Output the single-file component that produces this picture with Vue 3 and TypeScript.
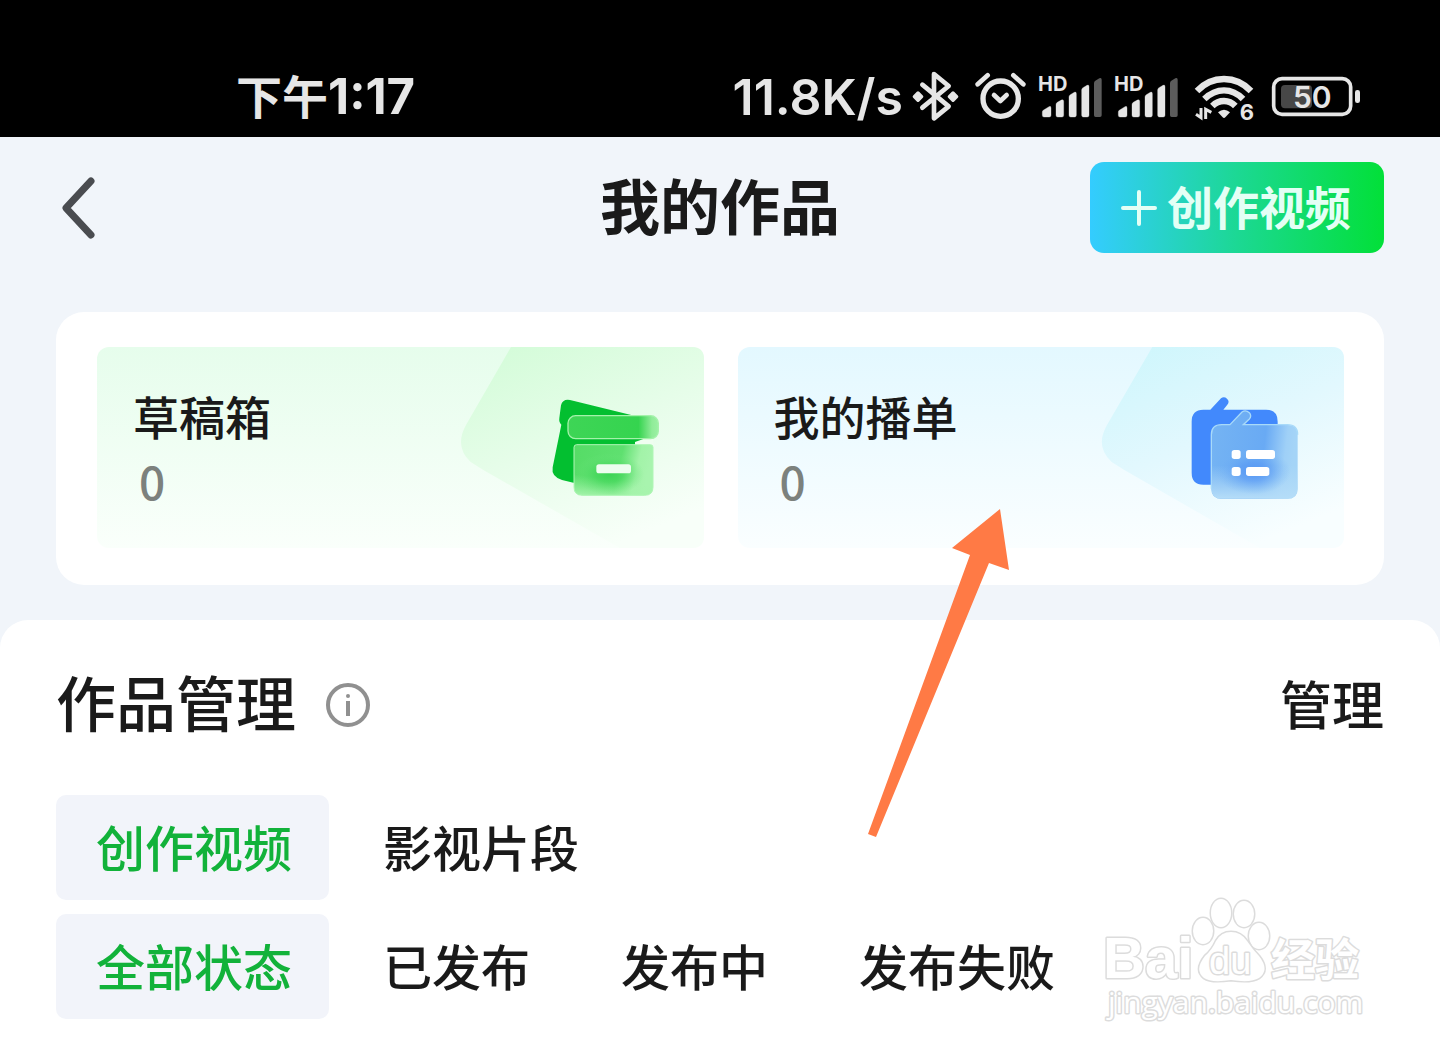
<script setup lang="ts">
import { ref } from 'vue'

interface Entry {
  label: string
  count: number
  tone: 'green' | 'blue'
}

const entries: Entry[] = [
  { label: '草稿箱', count: 0, tone: 'green' },
  { label: '我的播单', count: 0, tone: 'blue' },
]

const kinds = ['创作视频', '影视片段']
const states = ['全部状态', '已发布', '发布中', '发布失败']
const activeKind = ref(kinds[0])
const activeState = ref(states[0])
</script>

<template>
  <div class="page">
    <div class="status">
      <span class="status-text time">下午<b>1:17</b></span>
      <div class="status-right">
        <span class="status-text">11.8K/s</span>
        <svg class="tile" width="58" height="60" viewBox="570 21 174 180" aria-hidden="true">
          <path d="M607 74L686 139L642 175V42L686 78L607 143" fill="none" stroke="#e6e6e6" stroke-width="14" stroke-linejoin="round" stroke-linecap="round" />
          <path d="M594 99l11 11-11 11-11-11zM699 99l11 11-11 11-11-11z" fill="#e6e6e6" stroke="#e6e6e6" stroke-width="10" stroke-linejoin="round" />
        </svg>
        <svg class="tile" width="64" height="60" viewBox="744 21 192 180" aria-hidden="true">
          <g fill="none" stroke="#e6e6e6" stroke-linecap="round" stroke-linejoin="round">
            <circle cx="842" cy="116" r="53" stroke-width="16" />
            <path d="M822 105l19 18 19-18" stroke-width="14" />
            <path d="M773 73L803 46M880 46L910 73" stroke-width="14" />
          </g>
        </svg>
        <svg v-for="n in 2" :key="n" class="tile" width="76" height="60" viewBox="36 21 228 180" aria-hidden="true">
          <text x="54" y="94" font-size="60" font-weight="700" fill="#e6e6e6">HD</text>
          <path d="M67 156q0-4 4-6l16-10q6-3 6 4v22q0 5-5 5H72q-5 0-5-5zM108 134q0-5 4-7l12-7q7-3 7 4v42q0 5-5 5h-13q-5 0-5-5zM147 111q0-5 4-7l12-7q6-3 6 4v65q0 5-5 5h-12q-5 0-5-5zM185 90q0-5 4-7l12-7q6-3 6 4v86q0 5-5 5h-12q-5 0-5-5z" fill="#e6e6e6" stroke="#e6e6e6" stroke-width="1" />
          <path d="M222 70q0-6 4-8l12-7q7-3 7 4v107q0 5-5 5h-13q-5 0-5-5z" fill="#5c5c5c" />
        </svg>
        <svg class="tile" width="78" height="60" viewBox="492 21 234 180" aria-hidden="true">
          <g fill="none" stroke="#e6e6e6" stroke-width="19">
            <path d="M531 93Q565 57 612 57T693 93" />
            <path d="M553 117Q580 91 612 91T669 117" />
            <path d="M577 138Q592 123 612 123T646 138" />
          </g>
          <path d="M594 157q18-16 36 0l-14 15q-4 4-8 0z" fill="#e6e6e6" />
          <path d="M543 144v29l-15-10M557 177v-29l17 9" fill="none" stroke="#e6e6e6" stroke-width="9" />
          <text x="659" y="181" font-size="66" font-weight="700" fill="#e6e6e6">6</text>
        </svg>
        <svg class="tile" width="100" height="60" viewBox="726 21 300 180" aria-hidden="true">
          <rect x="783" y="75" width="93" height="70" rx="12" fill="#474747" />
          <rect x="761" y="56" width="231" height="107" rx="25" fill="none" stroke="#e6e6e6" stroke-width="11" />
          <rect x="1005" y="90" width="15" height="39" rx="7" fill="#e6e6e6" />
          <text x="877" y="145" text-anchor="middle" font-size="90" font-weight="600" fill="#e6e6e6">50</text>
        </svg>
      </div>
    </div>

    <header class="header">
      <button class="back" type="button" aria-label="返回">
        <svg width="44" height="70" viewBox="0 0 44 70" aria-hidden="true">
          <path d="M35 8L10 35L35 62" fill="none" stroke="#4a4c50" stroke-width="7" stroke-linecap="round" stroke-linejoin="round" />
        </svg>
      </button>
      <h1 class="title">我的作品</h1>
      <button class="create" type="button">
        <svg width="36" height="36" viewBox="0 0 36 36" aria-hidden="true">
          <path d="M18 2V34M2 18H34" stroke="#e4fff5" stroke-width="4" stroke-linecap="round" />
        </svg>
        <span>创作视频</span>
      </button>
    </header>

    <nav class="panel" aria-label="我的内容">
      <button v-for="e in entries" :key="e.tone" type="button" class="entry" :class="e.tone">
        <span class="entry-label">{{ e.label }}</span>
        <span class="entry-count">{{ e.count }}</span>
        <svg v-if="e.tone === 'green'" class="art" width="246" height="201" viewBox="54 51 738 603" aria-hidden="true">
          <defs>
            <linearGradient id="g-bg" x1="0.1" y1="0" x2="0.6" y2="1">
              <stop offset="0" stop-color="#d3fcd8" />
              <stop offset="0.5" stop-color="#e6fde9" />
              <stop offset="1" stop-color="#f8fff9" />
            </linearGradient>
            <linearGradient id="g-lid" x1="0" x2="1">
              <stop offset="0" stop-color="#3ed556" />
              <stop offset="0.78" stop-color="#35d44f" />
              <stop offset="0.93" stop-color="#90ec99" />
              <stop offset="1" stop-color="#9bf0a3" />
            </linearGradient>
            <linearGradient id="g-box" x1="0" x2="1" y1="0" y2="0.15">
              <stop offset="0" stop-color="#55dc66" />
              <stop offset="0.62" stop-color="#5fe070" />
              <stop offset="0.85" stop-color="#a2f3a8" />
              <stop offset="1" stop-color="#a8f4ae" />
            </linearGradient>
            <radialGradient id="g-glow">
              <stop offset="0" stop-color="#3cd455" />
              <stop offset="0.4" stop-color="#44d75b" stop-opacity="0.7" />
              <stop offset="1" stop-color="#70e57f" stop-opacity="0" />
            </radialGradient>
            <linearGradient id="g-low" x1="0.2" y1="0" x2="0" y2="1">
              <stop offset="0.6" stop-color="#a6f4ac" stop-opacity="0" />
              <stop offset="1" stop-color="#a6f4ac" />
            </linearGradient>
          </defs>
          <path d="M213 51L78 285Q42 350 92 396L130 420L540 654H756Q792 654 792 618V87Q792 51 756 51Z" fill="url(#g-bg)" />
          <path d="M363 226Q368 206 390 210L595 260L611 325Q608 336 594 336L585 336V440L400 458L366 450Q333 440 338 412L364 284Q356 277 358 264Z" fill="#03bf30" />
          <path d="M585 336L612 326H640V344H585Z" fill="#effef0" />
          <rect x="384" y="257" width="271" height="69" rx="23" fill="url(#g-lid)" stroke="#a4f2aa" stroke-width="4" />
          <path d="M402 352q0-8 8-8h221q8 0 8 8v119q0 25-25 25H427q-25 0-25-25z" fill="url(#g-box)" />
          <path d="M402 352q0-8 8-8h221q8 0 8 8v119q0 25-25 25H427q-25 0-25-25z" fill="url(#g-low)" />
          <ellipse cx="508" cy="432" rx="105" ry="62" fill="url(#g-glow)" />
          <path d="M402 352q0-8 8-8h221q8 0 8 8v119q0 25-25 25H427q-25 0-25-25z" fill="none" stroke="#b0f6b6" stroke-width="3" />
          <rect x="469" y="403" width="104" height="27" rx="8" fill="#edfdef" />
        </svg>
        <svg v-else class="art" width="246" height="201" viewBox="54 51 738 603" aria-hidden="true">
          <defs>
            <linearGradient id="b-bg" x1="0.1" y1="0" x2="0.6" y2="1">
              <stop offset="0" stop-color="#cef6fc" />
              <stop offset="0.5" stop-color="#e2f8fe" />
              <stop offset="1" stop-color="#f8feff" />
            </linearGradient>
            <linearGradient id="b-box" x1="0" x2="1" y1="0" y2="0.12">
              <stop offset="0" stop-color="#75b4f3" />
              <stop offset="0.65" stop-color="#69aaf4" />
              <stop offset="0.9" stop-color="#9fd0f7" />
              <stop offset="1" stop-color="#a4d4f7" />
            </linearGradient>
            <linearGradient id="b-low" x1="0" x2="0" y1="0" y2="1">
              <stop offset="0.55" stop-color="#b5ddf8" stop-opacity="0" />
              <stop offset="1" stop-color="#b5ddf8" />
            </linearGradient>
            <radialGradient id="b-glow">
              <stop offset="0" stop-color="#5596f4" />
              <stop offset="0.4" stop-color="#5c9cf4" stop-opacity="0.7" />
              <stop offset="1" stop-color="#75b4f3" stop-opacity="0" />
            </radialGradient>
          </defs>
          <path d="M217 51L81 285Q44 350 95 396L133 420L540 654H756Q792 654 792 618V87Q792 51 756 51Z" fill="url(#b-bg)" />
          <path d="M370 239H391L423 205Q432 198 441 206Q450 215 442 224L430 239H558Q593 239 593 275V464H370Q335 464 335 428V275Q335 239 370 239Z" fill="#4289fc" />
          <path d="M450 284L486 246Q497 238 508 248Q516 258 508 267L490 284H622Q653 284 653 314V476Q653 506 622 506H425Q394 506 394 476V314Q394 284 425 284Z" fill="url(#b-box)" />
          <path d="M394 314Q394 284 425 284H622Q653 284 653 314V476Q653 506 622 506H425Q394 506 394 476Z" fill="url(#b-low)" />
          <ellipse cx="520" cy="425" rx="112" ry="68" fill="url(#b-glow)" />
          <path d="M394 476V314Q394 284 425 284H450L486 246Q497 238 508 248Q516 258 508 267L490 284H622Q653 284 653 314" fill="none" stroke="#a8daf9" stroke-width="4" />
          <g fill="#fff">
            <rect x="455" y="360" width="27" height="27" rx="8" />
            <rect x="498" y="360" width="87" height="27" rx="8" />
            <rect x="455" y="411" width="27" height="27" rx="8" />
            <rect x="498" y="411" width="70" height="27" rx="8" />
          </g>
        </svg>
      </button>
    </nav>

    <main class="works">
      <div class="works-head">
        <h2 class="works-title">作品管理</h2>
        <button class="info" type="button" aria-label="说明">
          <svg width="44" height="44" viewBox="0 0 44 44" aria-hidden="true">
            <circle cx="22" cy="22" r="20" fill="none" stroke="#909090" stroke-width="4" />
            <path d="M22 18V33" stroke="#909090" stroke-width="4" />
            <circle cx="22" cy="13" r="2" fill="#909090" />
          </svg>
        </button>
        <button class="manage" type="button">管理</button>
      </div>
      <div class="filters">
        <button v-for="k in kinds" :key="k" type="button" class="chip" :class="{ active: k === activeKind }" @click="activeKind = k">{{ k }}</button>
      </div>
      <div class="filters">
        <button v-for="s in states" :key="s" type="button" class="chip" :class="{ active: s === activeState }" @click="activeState = s">{{ s }}</button>
      </div>
    </main>

    <svg class="arrow" width="142" height="330" viewBox="0 0 142 330" aria-hidden="true">
      <path d="M132 0L84 39L102 46L0 325L8 328L121 54L141 61Z" fill="#ff7a45" />
    </svg>

    <svg class="watermark" width="270" height="140" viewBox="0 0 270 140" aria-hidden="true">
      <g fill="#fff" stroke="#dcdcdc" stroke-width="3" paint-order="stroke" stroke-linejoin="round">
        <text class="brand" x="3" y="88" font-size="58" font-weight="700">Bai</text>
        <ellipse cx="103" cy="41" rx="10" ry="13" />
        <ellipse cx="121" cy="23" rx="10" ry="14" />
        <ellipse cx="144" cy="24" rx="10" ry="13" />
        <ellipse cx="159" cy="46" rx="10" ry="13" />
        <path d="M131 42Q141 42 147 51T159 66Q170 80 159 88Q151 93 131 90Q111 93 104 88Q94 80 105 66Q112 60 116 51Q121 42 131 42Z" />
        <text class="brand" x="109" y="84" font-size="38">du</text>
        <text class="cjk" x="171" y="86" font-size="44" font-weight="700">经验</text>
        <text class="url" x="8" y="123" font-size="30">jingyan.baidu.com</text>
      </g>
    </svg>
  </div>
</template>

<style>
body {
  margin: 0;
  background: #fff;
}
</style>

<style scoped>
.page {
  position: relative;
  display: flex;
  flex-direction: column;
  min-height: 100vh;
  overflow: hidden;
  background: #f1f5fa;
  color: #1a1a1a;
  font-family: Inter, "Noto Sans CJK SC", sans-serif;
}

button {
  margin: 0;
  padding: 0;
  border: 0;
  background: none;
  color: inherit;
  font: inherit;
  cursor: pointer;
}

.status {
  display: flex;
  align-items: center;
  justify-content: space-between;
  height: 80px;
  padding: 57px 78px 0 236px;
  background: #000;
  color: #e6e6e6;
}

.status-text {
  font-size: 50px;
  line-height: 60px;
  font-weight: 600;
  white-space: nowrap;
}

.time {
  font-size: 46px;
}

.time b {
  font-size: 49px;
  font-weight: 700;
}

.status-right {
  display: flex;
  align-items: center;
}

.status-right .status-text {
  margin-right: 7px;
}

.tile {
  flex: none;
}

.header {
  display: grid;
  grid-template-columns: 1fr auto 1fr;
  align-items: center;
  padding: 25px 56px 59px;
}

.back {
  justify-self: start;
  display: flex;
}

.title {
  margin: 0;
  font-size: 60px;
  line-height: 90px;
  font-weight: 700;
}

.create {
  justify-self: end;
  display: flex;
  align-items: center;
  gap: 10px;
  height: 91px;
  padding: 0 33px 0 31px;
  border-radius: 14px;
  background: linear-gradient(90deg, #34ccff, #1cd894 50%, #02e038);
  color: #e4fff5;
  font-size: 46px;
  line-height: 60px;
  font-weight: 700;
}

.panel {
  display: grid;
  grid-template-columns: 1fr 1fr;
  gap: 34px;
  margin: 0 56px;
  padding: 35px 40px 37px 41px;
  border-radius: 28px;
  background: #fff;
}

.entry {
  position: relative;
  display: flex;
  flex-direction: column;
  align-items: flex-start;
  height: 201px;
  padding: 41px 36px 0;
  border-radius: 12px;
  text-align: left;
}

.entry.green {
  background: linear-gradient(#e6fdec, #fafffb);
}

.entry.blue {
  background: linear-gradient(#e3f8ff, #fafeff);
}

.entry-label {
  font-size: 46px;
  line-height: 60px;
  font-weight: 500;
}

.entry-count {
  padding: 2px 6px 0;
  color: #7c817d;
  font-family: "Noto Sans CJK SC", sans-serif;
  font-size: 46px;
  line-height: 60px;
  font-weight: 500;
}

.art {
  position: absolute;
  top: 0;
  right: 0;
}

.works {
  flex: 1;
  margin-top: 35px;
  padding: 40px 56px 34px;
  border-radius: 28px 28px 0 0;
  background: #fff;
}

.works-head {
  display: flex;
  align-items: center;
  margin-bottom: 45px;
}

.works-title {
  margin: 0;
  font-size: 60px;
  line-height: 90px;
  font-weight: 500;
}

.info {
  display: flex;
  margin-left: 30px;
}

.manage {
  margin-left: auto;
  padding-top: 4px;
  font-size: 52px;
  line-height: 86px;
  font-weight: 500;
}

.filters {
  display: flex;
  gap: 14px;
}

.filters + .filters {
  margin-top: 14px;
}

.chip {
  height: 105px;
  padding: 4px 37px 0 40px;
  border-radius: 10px;
  font-size: 49px;
  line-height: 60px;
  font-weight: 500;
  white-space: nowrap;
}

.chip.active {
  background: #f2f4fa;
  color: #12b23a;
}

.arrow {
  position: absolute;
  top: 509px;
  left: calc(50% + 148px);
  pointer-events: none;
}

.watermark {
  position: absolute;
  top: 890px;
  right: 70px;
  pointer-events: none;
}

.brand {
  font-family: "Liberation Sans", sans-serif;
}

.cjk {
  font-family: "Noto Sans CJK SC", sans-serif;
}

.url {
  font-family: "Open Sans", sans-serif;
}
</style>
